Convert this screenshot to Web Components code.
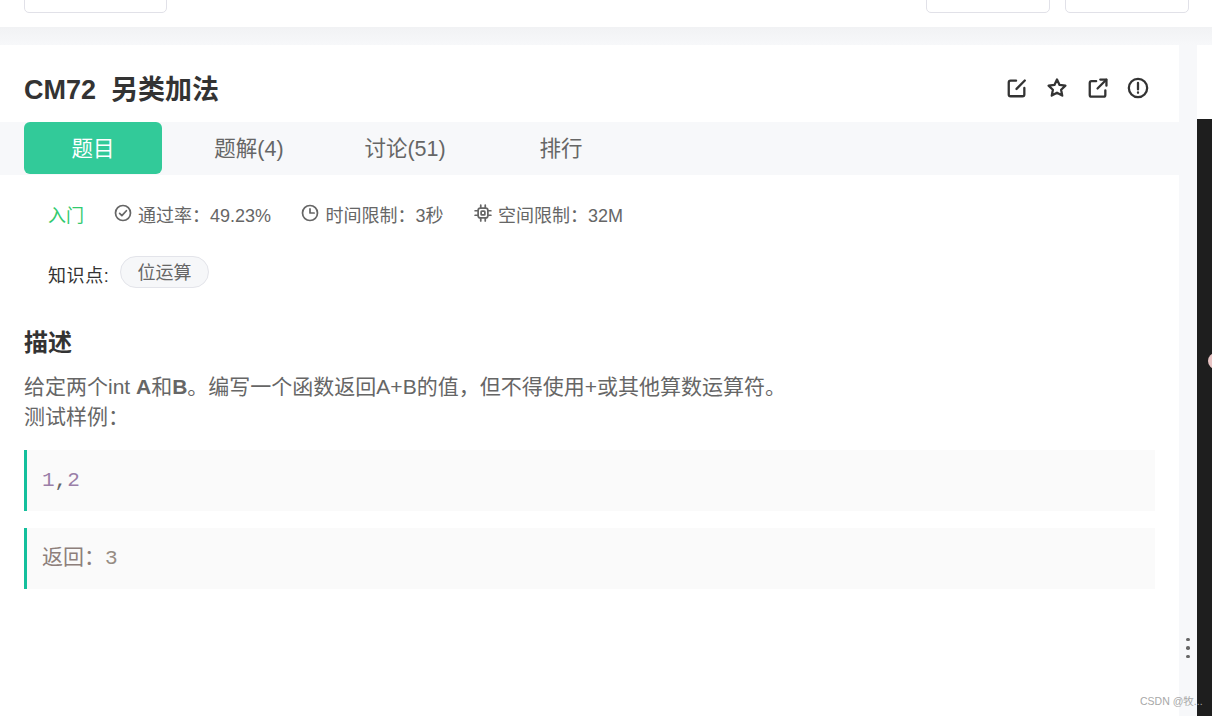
<!DOCTYPE html>
<html lang="zh">
<head>
<meta charset="utf-8">
<title>CM72 另类加法</title>
<style>
    html, body { margin: 0; padding: 0; height: 100%; background: #fff; }
    body {
        font-family: "Liberation Sans", "Noto Sans CJK SC", sans-serif;
        color: #666;
        overflow: hidden;
    }
</style>
</head>
<body>
<nc-page>
    <nc-topbar slot="top"></nc-topbar>
    <nc-header slot="main" heading="CM72&nbsp;&nbsp;另类加法"></nc-header>
    <nc-tabs slot="main"></nc-tabs>
    <nc-meta slot="main"></nc-meta>
    <nc-knowledge slot="main" tag="位运算"></nc-knowledge>
    <nc-desc slot="main"></nc-desc>
    <nc-sample slot="main"><span style="color:#9a7fa8">1</span><span style="color:#666">,</span><span style="color:#9a7fa8">2</span></nc-sample>
    <nc-sample slot="main" style="margin-top:17px"><span style="color:#8d7f7b">返回：</span><span style="color:#968c84">3</span></nc-sample>
</nc-page>

<script>
const ICONS = {
    edit: '<path d="M11 4H5a2 2 0 0 0-2 2v13a2 2 0 0 0 2 2h13a2 2 0 0 0 2-2v-7"/><path d="M11.500 13 20.500 3.800"/>',
    star: '<path d="M12 2.800l2.800 5.800 6.400.9-4.700 4.400 1.200 6.400-5.700-3.100-5.700 3.100 1.200-6.400-4.700-4.400 6.400-.9z"/>',
    share: '<path d="M10 4.500H5a2 2 0 0 0-2 2v13a2 2 0 0 0 2 2h13a2 2 0 0 0 2-2v-5"/><path d="M11.500 12.500 21 3"/><path d="M14.500 2.800h6.700v6.700"/>',
    alert: '<circle cx="12" cy="12" r="10"/><path d="M12 6.500v7"/><path d="M12 16.800v.5"/>',
    check: '<circle cx="12" cy="12" r="10"/><path d="M7.500 12.500l3 3 6-6.500"/>',
    clock: '<circle cx="12" cy="12" r="10"/><path d="M12 6.500V12h5.500"/>',
    chip: '<rect x="5.500" y="5.500" width="13" height="13" rx="3"/><rect x="9.500" y="9.500" width="5" height="5" rx="1"/><path d="M9 1.500v4M15 1.500v4M9 18.500v4M15 18.500v4M1.500 9h4M1.500 15h4M18.500 9h4M18.500 15h4"/>'
};

class NcIcon extends HTMLElement {
    connectedCallback() {
        const size = this.getAttribute('size') || 22;
        const weight = this.getAttribute('weight') || 2.5;
        this.attachShadow({ mode: 'open' }).innerHTML = `
            <style>
                :host { display: inline-flex; width: ${size}px; height: ${size}px; }
                svg { width: 100%; height: 100%; fill: none; stroke: currentColor; stroke-width: ${weight};
                      stroke-linecap: round; stroke-linejoin: round; }
            </style>
            <svg viewBox="0 0 24 24">${ICONS[this.getAttribute('name')]}</svg>`;
    }
}

class NcPage extends HTMLElement {
    constructor() {
        super();
        this.attachShadow({ mode: 'open' }).innerHTML = `
            <style>
                :host { display: flex; flex-direction: column; height: 716px; background: #f7f8fa; position: relative; overflow: hidden; }
                .gap { height: 18px; background: linear-gradient(#f1f2f4, #f7f8fa); flex: none; }
                .body { flex: 1; display: grid; grid-template-columns: 1179px 18px 15px; min-height: 0; }
                .card { background: #fff; }
                .rail { position: relative; display: flex; flex-direction: column; align-items: center; justify-content: flex-end; gap: 5px; padding-bottom: 58px; }
                .rail i { width: 3.500px; height: 3.500px; border-radius: 50%; background: #666; }
                .side { display: flex; flex-direction: column; }
                .side .cap { height: 74px; background: #fff; }
                .side .dark { flex: 1; background: #1e1e1e; position: relative; overflow: hidden; }
                .dot { position: absolute; left: 11px; top: 234px; width: 16px; height: 16px; border-radius: 50%; background: #e8c4c4; }
                .mark { position: absolute; left: 1140px; top: 695px; font-size: 10.500px; line-height: 13px; color: #a8a8a8; white-space: nowrap; }
            </style>
            <slot name="top"></slot>
            <div class="gap"></div>
            <div class="body">
                <div class="card"><slot name="main"></slot></div>
                <div class="rail"><i></i><i></i><i></i></div>
                <div class="side"><div class="cap"></div><div class="dark"><div class="dot"></div></div></div>
            </div>
            <div class="mark">CSDN @牧...</div>`;
    }
}

class NcTopbar extends HTMLElement {
    constructor() {
        super();
        this.attachShadow({ mode: 'open' }).innerHTML = `
            <style>
                :host { display: flex; flex: none; height: 27px; background: #fff; padding: 0 23px 0 24px; box-sizing: border-box; gap: 15px; overflow: hidden; }
                div { height: 24px; margin-top: -11px; box-sizing: border-box; width: 124px; border: 1px solid #e1e1e8; border-radius: 5px; background: #fff; }
                .first { width: 143px; margin-right: auto; }
            </style>
            <div class="first"></div><div></div><div></div>`;
    }
}

class NcHeader extends HTMLElement {
    connectedCallback() {
        this.attachShadow({ mode: 'open' }).innerHTML = `
            <style>
                :host { display: flex; align-items: center; justify-content: space-between; height: 77px; padding: 13px 30px 0 24px; box-sizing: border-box; }
                h1 { margin: 0; font-size: 27px; line-height: 36px; font-weight: 700; color: #333; }
                .tools { display: flex; gap: 18.500px; color: #333; padding-bottom: 4px; }
            </style>
            <h1>${this.getAttribute('heading')}</h1>
            <div class="tools">
                <nc-icon name="edit"></nc-icon>
                <nc-icon name="star"></nc-icon>
                <nc-icon name="share"></nc-icon>
                <nc-icon name="alert"></nc-icon>
            </div>`;
    }
}

class NcTabs extends HTMLElement {
    constructor() {
        super();
        this.attachShadow({ mode: 'open' }).innerHTML = `
            <style>
                :host { display: flex; gap: 18px; height: 53px; padding-left: 24px; background: #f7f8fa; font-size: 21.500px; color: #666; }
                a { width: 138px; height: 52px; box-sizing: border-box; padding-bottom: 4px; display: flex; align-items: center; justify-content: center; border-radius: 6px; }
                .on { background: #32ca99; color: #fff; }
            </style>
            <a class="on">题目</a><a>题解(4)</a><a>讨论(51)</a><a>排行</a>`;
    }
}

class NcMeta extends HTMLElement {
    constructor() {
        super();
        this.attachShadow({ mode: 'open' }).innerHTML = `
            <style>
                :host { display: flex; align-items: center; height: 81px; padding: 0 0 4px 48px; box-sizing: border-box; font-size: 18px; color: #666; }
                .level { color: #32ca6e; margin-right: 29.500px; }
                .item { display: flex; align-items: center; gap: 6.500px; margin-right: 30px; }
                nc-icon { position: relative; top: -1px; }
            </style>
            <span class="level">入门</span>
            <span class="item"><nc-icon name="check" size="18" weight="2.300"></nc-icon>通过率：49.23%</span>
            <span class="item"><nc-icon name="clock" size="18" weight="2.300"></nc-icon>时间限制：3秒</span>
            <span class="item"><nc-icon name="chip" size="18" weight="2.300"></nc-icon>空间限制：32M</span>`;
    }
}

class NcKnowledge extends HTMLElement {
    connectedCallback() {
        this.attachShadow({ mode: 'open' }).innerHTML = `
            <style>
                :host { display: flex; align-items: flex-start; gap: 10px; padding-left: 48px; height: 32px; font-size: 18px; color: #333; }
                .label { line-height: 26px; margin-top: 7px; width: 62px; letter-spacing: .6px; white-space: nowrap; }
                .tag { height: 32px; box-sizing: border-box; padding: 0 16.500px 2px; display: flex; align-items: center; border: 1px solid #e3e4ea; border-radius: 16px; background: #f6f7f9; color: #666; }
            </style>
            <span class="label">知识点:</span>
            <span class="tag">${this.getAttribute('tag')}</span>`;
    }
}

class NcDesc extends HTMLElement {
    constructor() {
        super();
        this.attachShadow({ mode: 'open' }).innerHTML = `
            <style>
                :host { display: block; padding: 37px 24px 0; }
                h2 { margin: 0 0 11px; font-size: 24px; line-height: 36px; font-weight: 700; color: #333; }
                p { margin: 0; font-size: 21px; line-height: 30px; color: #666; }
            </style>
            <h2>描述</h2>
            <p>给定两个int <b>A</b>和<b>B</b>。编写一个函数返回A+B的值，但不得使用+或其他算数运算符。<br>测试样例：</p>`;
    }
}

class NcSample extends HTMLElement {
    constructor() {
        super();
        this.attachShadow({ mode: 'open' }).innerHTML = `
            <style>
                :host { display: block; margin: 18px 24px 0; height: 61px; box-sizing: border-box; padding-left: 15px; border-left: 3px solid #14bf9c; background: #fafafa;
                        font-family: "Liberation Mono", "Noto Sans CJK SC", monospace; font-size: 21px; line-height: 61px; }
            </style>
            <slot></slot>`;
    }
}

customElements.define('nc-icon', NcIcon);
customElements.define('nc-page', NcPage);
customElements.define('nc-topbar', NcTopbar);
customElements.define('nc-header', NcHeader);
customElements.define('nc-tabs', NcTabs);
customElements.define('nc-meta', NcMeta);
customElements.define('nc-knowledge', NcKnowledge);
customElements.define('nc-desc', NcDesc);
customElements.define('nc-sample', NcSample);
</script>
</body>
</html>
